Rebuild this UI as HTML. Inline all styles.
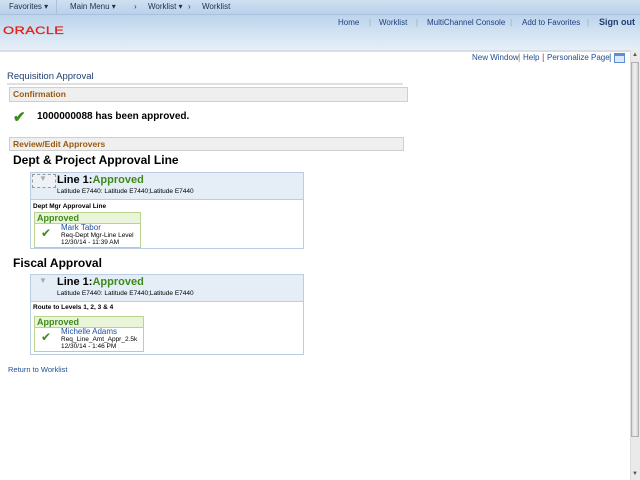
<!DOCTYPE html>
<html><head><style>
body{margin:0;width:640px;height:480px;position:relative;overflow:hidden;background:#fff;font-family:"Liberation Sans",Arial,sans-serif;}
.a{position:absolute;white-space:nowrap}
.top{left:0;top:0;width:640px;height:14px;background:linear-gradient(#cfe0f1,#b9d1ea);font-size:8px;color:#1f2f4f;border-bottom:1px solid #a9c3de}
.hdr{left:0;top:15px;width:640px;height:35px;background:linear-gradient(#bcd4ec,#d6e5f3 60%,#e6eff8);border-bottom:2px solid #d8dde3}
.nav{font-size:8px;color:#1f3f7f;top:18px}
.lk{color:#1f4f8f;font-size:8px}
.sec{background:#efefef;border:1px solid #cfcfcf;font-size:8.5px;font-weight:bold;color:#9a5a10;padding-left:3px;line-height:13px}
.box{border:1px solid #b9cde4;background:#fff}
.bh{background:#e5eef7;border-bottom:1px solid #b9cde4}
.card{border:1px solid #b8d48f;background:#fff}
.ch{background:#e9f4d9;border-bottom:1px solid #b8d48f;color:#3d8b1a;font-weight:bold;font-size:9px;line-height:10px;padding-left:2px}
.g{color:#3d8b1a}
</style></head><body>
<div class="a top">
 <span class="a" style="left:9px;top:2px">Favorites ▾</span>
 <div class="a" style="left:56px;top:0;width:1px;height:14px;background:#a9c3de"></div>
 <span class="a" style="left:70px;top:2px">Main Menu ▾</span>
 <span class="a" style="left:134px;top:2px">›</span>
 <span class="a" style="left:148px;top:2px">Worklist ▾</span>
 <span class="a" style="left:188px;top:2px">›</span>
 <span class="a" style="left:202px;top:2px">Worklist</span>
</div>
<div class="a hdr"></div>
<div class="a" style="left:3px;top:25px;font-size:11px;color:#e2231a;letter-spacing:0.3px;transform:scaleX(1.3);transform-origin:left;-webkit-text-stroke:0.3px #e2231a">ORACLE</div>
<span class="a nav" style="left:338px">Home</span>
<span class="a nav" style="left:369px;color:#9ab">|</span>
<span class="a nav" style="left:379px">Worklist</span>
<span class="a nav" style="left:416px;color:#9ab">|</span>
<span class="a nav" style="left:427px">MultiChannel Console</span>
<span class="a nav" style="left:510px;color:#9ab">|</span>
<span class="a nav" style="left:522px">Add to Favorites</span>
<span class="a nav" style="left:587px;color:#9ab">|</span>
<span class="a nav" style="left:599px;font-weight:bold;font-size:9px;top:17px;color:#1f3f6f">Sign out</span>

<span class="a lk" style="left:472px;top:53px">New Window</span>
<span class="a" style="left:518px;top:52px;font-size:9px;color:#c08020">|</span>
<span class="a lk" style="left:523px;top:53px">Help</span>
<span class="a" style="left:542px;top:52px;font-size:9px;color:#a03050">|</span>
<span class="a lk" style="left:547px;top:53px">Personalize Page</span>
<span class="a" style="left:609px;top:52px;font-size:9px;color:#1f4f8f">|</span>
<div class="a" style="left:614px;top:53px;width:9px;height:8px;border:1px solid #5b8fd0;background:linear-gradient(#5b8fd0 0 2px,#dbe8f7 2px)"></div>

<div class="a" style="left:630px;top:50px;width:10px;height:430px;background:#eaeaea;border-left:1px solid #ddd"></div>
<div class="a" style="left:631px;top:62px;width:8px;height:375px;background:linear-gradient(90deg,#d8d8d8,#f2f2f2,#d0d0d0);border:1px solid #b0b0b0;box-sizing:border-box"></div>
<span class="a" style="left:632px;top:52px;font-size:6px;color:#555">▲</span>
<span class="a" style="left:632px;top:471px;font-size:6px;color:#555">▼</span>

<span class="a" style="left:7px;top:71px;font-size:9.5px;color:#1f3f6f">Requisition Approval</span>
<div class="a" style="left:7px;top:83px;width:396px;height:2px;background:#e0e0e0"></div>
<div class="a sec" style="left:9px;top:87px;width:394px;height:13px">Confirmation</div>
<span class="a g" style="left:13px;top:108px;font-size:15px;font-weight:bold">✔</span>
<span class="a" style="left:37px;top:111px;font-size:10px;font-weight:bold">1000000088 has been approved.</span>
<div class="a sec" style="left:9px;top:137px;width:390px;height:12px;line-height:12px">Review/Edit Approvers</div>

<span class="a" style="left:13px;top:153px;font-size:12px;font-weight:bold">Dept &amp; Project Approval Line</span>
<div class="a box" style="left:30px;top:172px;width:272px;height:75px">
 <div class="bh" style="height:26px;position:relative">
  <div class="a" style="left:1px;top:1px;width:22px;height:12px;border:1px dashed #999;background:#eef2f7"></div>
  <span class="a" style="left:8px;top:1px;font-size:8px;color:#aaa">▼</span>
  <span class="a" style="left:26px;top:1px;font-size:11px;font-weight:bold">Line 1:<span class="g">Approved</span></span>
  <span class="a" style="left:26px;top:15px;font-size:6.5px">Latitude E7440: Latitude E7440;Latitude E7440</span>
 </div>
 <span class="a" style="left:2px;top:30px;font-size:6.5px;font-weight:bold">Dept Mgr Approval Line</span>
 <div class="a card" style="left:3px;top:39px;width:105px;height:34px">
  <div class="ch">Approved</div>
  <span class="a g" style="left:6px;top:13px;font-size:12px">✔</span>
  <span class="a" style="left:26px;top:10px;font-size:8px;color:#1f4f9f">Mark Tabor</span>
  <span class="a" style="left:26px;top:19px;font-size:6.5px">Req-Dept Mgr-Line Level</span>
  <span class="a" style="left:26px;top:26px;font-size:6.5px">12/30/14 - 11:39 AM</span>
 </div>
</div>

<span class="a" style="left:13px;top:256px;font-size:12px;font-weight:bold">Fiscal Approval</span>
<div class="a box" style="left:30px;top:274px;width:272px;height:79px">
 <div class="bh" style="height:26px;position:relative">
  <span class="a" style="left:8px;top:1px;font-size:8px;color:#aaa">▼</span>
  <span class="a" style="left:26px;top:1px;font-size:11px;font-weight:bold">Line 1:<span class="g">Approved</span></span>
  <span class="a" style="left:26px;top:15px;font-size:6.5px">Latitude E7440: Latitude E7440;Latitude E7440</span>
 </div>
 <span class="a" style="left:2px;top:29px;font-size:6.5px;font-weight:bold">Route to Levels 1, 2, 3 &amp; 4</span>
 <div class="a card" style="left:3px;top:41px;width:108px;height:34px">
  <div class="ch">Approved</div>
  <span class="a g" style="left:6px;top:13px;font-size:12px">✔</span>
  <span class="a" style="left:26px;top:10px;font-size:8px;color:#1f4f9f">Michelle Adams</span>
  <span class="a" style="left:26px;top:19px;font-size:6.5px">Req_Line_Amt_Appr_2.5k</span>
  <span class="a" style="left:26px;top:26px;font-size:6.5px">12/30/14 - 1:46 PM</span>
 </div>
</div>
<span class="a lk" style="left:8px;top:365px;font-size:7.5px">Return to Worklist</span>
</body></html>
